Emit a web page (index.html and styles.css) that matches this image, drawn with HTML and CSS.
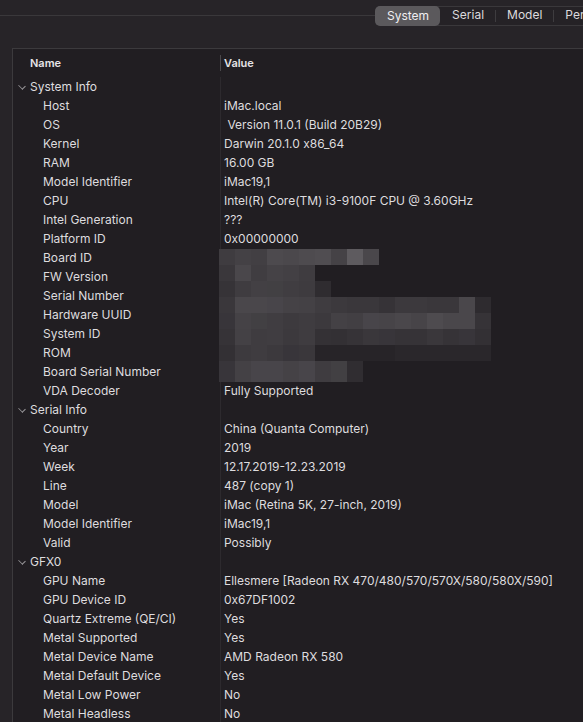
FILE: index.html
```html
<!DOCTYPE html>
<html>
<head>
<meta charset="utf-8">
<link rel="stylesheet" href="styles.css">
</head>
<body>
<div class="toolbar">
  <div class="rule"></div>
  <div class="segmented">
    <div class="seg active">System</div>
    <div class="seg">Serial</div>
    <div class="sep"></div>
    <div class="seg">Model</div>
    <div class="sep"></div>
    <div class="seg">Peri</div>
  </div>
</div>
<div class="panel">
  <div class="header">
    <div class="hname">Name</div>
    <div class="hdiv"></div>
    <div class="hvalue">Value</div>
  </div>
  <div class="rows">
    <div class="row group"><div class="name"><span class="chev"></span>System Info</div><div class="value"></div></div>
    <div class="row"><div class="name">Host</div><div class="value">iMac.local</div></div>
    <div class="row"><div class="name">OS</div><div class="value"> Version 11.0.1 (Build 20B29)</div></div>
    <div class="row"><div class="name">Kernel</div><div class="value">Darwin 20.1.0 x86_64</div></div>
    <div class="row"><div class="name">RAM</div><div class="value">16.00 GB</div></div>
    <div class="row"><div class="name">Model Identifier</div><div class="value">iMac19,1</div></div>
    <div class="row"><div class="name">CPU</div><div class="value">Intel(R) Core(TM) i3-9100F CPU @ 3.60GHz</div></div>
    <div class="row"><div class="name">Intel Generation</div><div class="value">???</div></div>
    <div class="row"><div class="name">Platform ID</div><div class="value">0x00000000</div></div>
    <div class="row"><div class="name">Board ID</div><div class="value"></div></div>
    <div class="row"><div class="name">FW Version</div><div class="value"></div></div>
    <div class="row"><div class="name">Serial Number</div><div class="value"></div></div>
    <div class="row"><div class="name">Hardware UUID</div><div class="value"></div></div>
    <div class="row"><div class="name">System ID</div><div class="value"></div></div>
    <div class="row"><div class="name">ROM</div><div class="value"></div></div>
    <div class="row"><div class="name">Board Serial Number</div><div class="value"></div></div>
    <div class="row"><div class="name">VDA Decoder</div><div class="value">Fully Supported</div></div>
    <div class="row group"><div class="name"><span class="chev"></span>Serial Info</div><div class="value"></div></div>
    <div class="row"><div class="name">Country</div><div class="value">China (Quanta Computer)</div></div>
    <div class="row"><div class="name">Year</div><div class="value">2019</div></div>
    <div class="row"><div class="name">Week</div><div class="value">12.17.2019-12.23.2019</div></div>
    <div class="row"><div class="name">Line</div><div class="value">487 (copy 1)</div></div>
    <div class="row"><div class="name">Model</div><div class="value">iMac (Retina 5K, 27-inch, 2019)</div></div>
    <div class="row"><div class="name">Model Identifier</div><div class="value">iMac19,1</div></div>
    <div class="row"><div class="name">Valid</div><div class="value">Possibly</div></div>
    <div class="row group"><div class="name"><span class="chev"></span>GFX0</div><div class="value"></div></div>
    <div class="row"><div class="name">GPU Name</div><div class="value">Ellesmere [Radeon RX 470/480/570/570X/580/580X/590]</div></div>
    <div class="row"><div class="name">GPU Device ID</div><div class="value">0x67DF1002</div></div>
    <div class="row"><div class="name">Quartz Extreme (QE/CI)</div><div class="value">Yes</div></div>
    <div class="row"><div class="name">Metal Supported</div><div class="value">Yes</div></div>
    <div class="row"><div class="name">Metal Device Name</div><div class="value">AMD Radeon RX 580</div></div>
    <div class="row"><div class="name">Metal Default Device</div><div class="value">Yes</div></div>
    <div class="row"><div class="name">Metal Low Power</div><div class="value">No</div></div>
    <div class="row"><div class="name">Metal Headless</div><div class="value">No</div></div>

    <svg class="mosaic" width="272" height="134" viewBox="0 0 272 134">
      <g>
        <rect x="0" y="0" width="16" height="16" fill="#3f3c40"/>
        <rect x="16" y="0" width="16" height="16" fill="#444145"/>
        <rect x="32" y="0" width="16" height="16" fill="#423f43"/>
        <rect x="48" y="0" width="16" height="16" fill="#4d4a4e"/>
        <rect x="64" y="0" width="16" height="16" fill="#4b484c"/>
        <rect x="80" y="0" width="16" height="16" fill="#4e4b4f"/>
        <rect x="96" y="0" width="16" height="16" fill="#504d51"/>
        <rect x="112" y="0" width="16" height="16" fill="#454246"/>
        <rect x="128" y="0" width="16" height="16" fill="#5e5b5f"/>
        <rect x="144" y="0" width="16" height="16" fill="#4a474b"/>

        <rect x="0" y="16" width="16" height="16" fill="#3a373b"/>
        <rect x="16" y="16" width="16" height="16" fill="#4a474b"/>
        <rect x="32" y="16" width="16" height="16" fill="#403d41"/>
        <rect x="48" y="16" width="16" height="16" fill="#454246"/>
        <rect x="64" y="16" width="16" height="16" fill="#434044"/>
        <rect x="80" y="16" width="16" height="16" fill="#3f3c40"/>

        <rect x="0" y="32" width="16" height="16" fill="#363337"/>
        <rect x="16" y="32" width="16" height="16" fill="#3f3c40"/>
        <rect x="32" y="32" width="16" height="16" fill="#434044"/>
        <rect x="48" y="32" width="16" height="16" fill="#424043"/>
        <rect x="64" y="32" width="16" height="16" fill="#403d41"/>
        <rect x="80" y="32" width="16" height="16" fill="#3e3b3f"/>
        <rect x="96" y="32" width="16" height="16" fill="#2f2c30"/>

        <rect x="0" y="48" width="16" height="16" fill="#3a373b"/>
        <rect x="16" y="48" width="16" height="16" fill="#4a474b"/>
        <rect x="32" y="48" width="16" height="16" fill="#4a474b"/>
        <rect x="48" y="48" width="16" height="16" fill="#48454a"/>
        <rect x="64" y="48" width="16" height="16" fill="#454246"/>
        <rect x="80" y="48" width="16" height="16" fill="#444145"/>
        <rect x="96" y="48" width="16" height="16" fill="#3f3c40"/>
        <rect x="112" y="48" width="16" height="16" fill="#3c393d"/>
        <rect x="128" y="48" width="16" height="16" fill="#3a373b"/>
        <rect x="144" y="48" width="16" height="16" fill="#3a373b"/>
        <rect x="160" y="48" width="16" height="16" fill="#363337"/>
        <rect x="176" y="48" width="16" height="16" fill="#3c393d"/>
        <rect x="192" y="48" width="16" height="16" fill="#3c393d"/>
        <rect x="208" y="48" width="16" height="16" fill="#3a373b"/>
        <rect x="224" y="48" width="16" height="16" fill="#3a373b"/>
        <rect x="240" y="48" width="16" height="16" fill="#4a474b"/>
        <rect x="256" y="48" width="16" height="16" fill="#2e2b2f"/>

        <rect x="0" y="64" width="16" height="16" fill="#38353a"/>
        <rect x="16" y="64" width="16" height="16" fill="#454246"/>
        <rect x="32" y="64" width="16" height="16" fill="#424043"/>
        <rect x="48" y="64" width="16" height="16" fill="#403d41"/>
        <rect x="64" y="64" width="16" height="16" fill="#3d3a3e"/>
        <rect x="80" y="64" width="16" height="16" fill="#3f3c40"/>
        <rect x="96" y="64" width="16" height="16" fill="#3c393d"/>
        <rect x="112" y="64" width="16" height="16" fill="#444145"/>
        <rect x="128" y="64" width="16" height="16" fill="#423f43"/>
        <rect x="144" y="64" width="16" height="16" fill="#48454a"/>
        <rect x="160" y="64" width="16" height="16" fill="#474448"/>
        <rect x="176" y="64" width="16" height="16" fill="#4a474b"/>
        <rect x="192" y="64" width="16" height="16" fill="#474448"/>
        <rect x="208" y="64" width="16" height="16" fill="#4e4b4f"/>
        <rect x="224" y="64" width="16" height="16" fill="#4a474b"/>
        <rect x="240" y="64" width="16" height="16" fill="#4a474b"/>
        <rect x="256" y="64" width="16" height="16" fill="#363337"/>

        <rect x="0" y="80" width="16" height="16" fill="#363337"/>
        <rect x="16" y="80" width="16" height="16" fill="#444145"/>
        <rect x="32" y="80" width="16" height="16" fill="#3f3c40"/>
        <rect x="48" y="80" width="16" height="16" fill="#403d41"/>
        <rect x="64" y="80" width="16" height="16" fill="#3c393d"/>
        <rect x="80" y="80" width="16" height="16" fill="#3f3c40"/>
        <rect x="96" y="80" width="16" height="16" fill="#343135"/>
        <rect x="112" y="80" width="16" height="16" fill="#333034"/>
        <rect x="128" y="80" width="16" height="16" fill="#363337"/>
        <rect x="144" y="80" width="16" height="16" fill="#3a373b"/>
        <rect x="160" y="80" width="16" height="16" fill="#38353a"/>
        <rect x="176" y="80" width="16" height="16" fill="#363337"/>
        <rect x="192" y="80" width="16" height="16" fill="#363337"/>
        <rect x="208" y="80" width="16" height="16" fill="#3a373b"/>
        <rect x="224" y="80" width="16" height="16" fill="#363337"/>
        <rect x="240" y="80" width="16" height="16" fill="#38353a"/>
        <rect x="256" y="80" width="16" height="16" fill="#333034"/>

        <rect x="0" y="96" width="16" height="16" fill="#333034"/>
        <rect x="16" y="96" width="16" height="16" fill="#3d3a3e"/>
        <rect x="32" y="96" width="16" height="16" fill="#3f3c40"/>
        <rect x="48" y="96" width="16" height="16" fill="#3c393d"/>
        <rect x="64" y="96" width="16" height="16" fill="#38353a"/>
        <rect x="80" y="96" width="16" height="16" fill="#3a373b"/>
        <rect x="96" y="96" width="176" height="16" fill="#272428"/>
        <rect x="176" y="96" width="96" height="16" fill="#2a272b"/>

        <rect x="0" y="112" width="16" height="21" fill="#38353a"/>
        <rect x="16" y="112" width="16" height="21" fill="#444145"/>
        <rect x="32" y="112" width="16" height="21" fill="#48454a"/>
        <rect x="48" y="112" width="16" height="21" fill="#48454a"/>
        <rect x="64" y="112" width="16" height="21" fill="#454246"/>
        <rect x="80" y="112" width="16" height="21" fill="#48454a"/>
        <rect x="96" y="112" width="16" height="21" fill="#3f3c40"/>
        <rect x="112" y="112" width="16" height="21" fill="#424043"/>
        <rect x="128" y="112" width="16" height="21" fill="#302d31"/>
      </g>
    </svg>
  </div>
</div>
</body>
</html>
```

FILE: styles.css
```css
* { box-sizing: border-box; }
html, body { margin: 0; padding: 0; }
body {
  width: 583px;
  height: 722px;
  overflow: hidden;
  background: #272428;
  font-family: "Inter", "Liberation Sans", sans-serif;
  font-size: 12px;
  color: #dedcdf;
}
.toolbar {
  height: 48px;
  display: flex;
  align-items: flex-start;
  padding-top: 6px;
  overflow: hidden;
}
.rule {
  width: 375px;
  flex: none;
  height: 1px;
  margin-top: 9px;
  background: #3a383b;
}
.segmented {
  flex: none;
  display: flex;
  align-items: center;
  height: 20px;
  border: 1px solid #3a383b;
  border-right: none;
  border-radius: 6px 0 0 6px;
  background: #252226;
  white-space: nowrap;
}
.seg {
  height: 20px;
  line-height: 18px;
  padding: 0 11px;
  color: #dcdadd;
}
.seg.active {
  background: #5b595c;
  border-radius: 5px;
  margin-left: -1px;
  margin-top: -1px;
  margin-right: 1px;
  height: 20px;
  line-height: 20px;
  padding: 0 11px 0 12px;
  color: #f0eef1;
}
.sep {
  width: 1px;
  height: 12px;
  background: #3e3c3f;
}
.panel {
  margin-left: 12px;
  border-top: 1px solid #3c3a3d;
  border-left: 1px solid #3c3a3d;
  background: #211e22;
  height: 674px;
}
.header {
  height: 28px;
  display: flex;
  align-items: center;
  font-size: 11px;
  font-weight: 600;
  color: #e6e4e7;
}
.hname {
  width: 207px;
  padding-left: 17px;
}
.hdiv {
  width: 1px;
  height: 16px;
  background: #4a484b;
}
.hvalue {
  padding-left: 3px;
}
.rows {
  position: relative;
}
.row {
  display: flex;
  height: 19px;
  line-height: 19px;
}
.name {
  width: 207px;
  flex: none;
  padding-left: 30px;
  white-space: nowrap;
}
.group .name {
  padding-left: 4px;
  display: flex;
  align-items: center;
}
.chev {
  display: inline-block;
  width: 8px;
  height: 8px;
  margin-right: 5px;
  position: relative;
}
.chev::before {
  content: "";
  position: absolute;
  left: 1.5px;
  top: 0;
  width: 5px;
  height: 5px;
  border-right: 1px solid #9a989b;
  border-bottom: 1px solid #9a989b;
  transform: rotate(45deg) scaleY(0.8);
}
.value {
  flex: 1;
  border-left: 1px solid #2d2a2e;
  padding-left: 3px;
  white-space: pre;
}
.mosaic {
  position: absolute;
  left: 206px;
  top: 172px;
}
```
